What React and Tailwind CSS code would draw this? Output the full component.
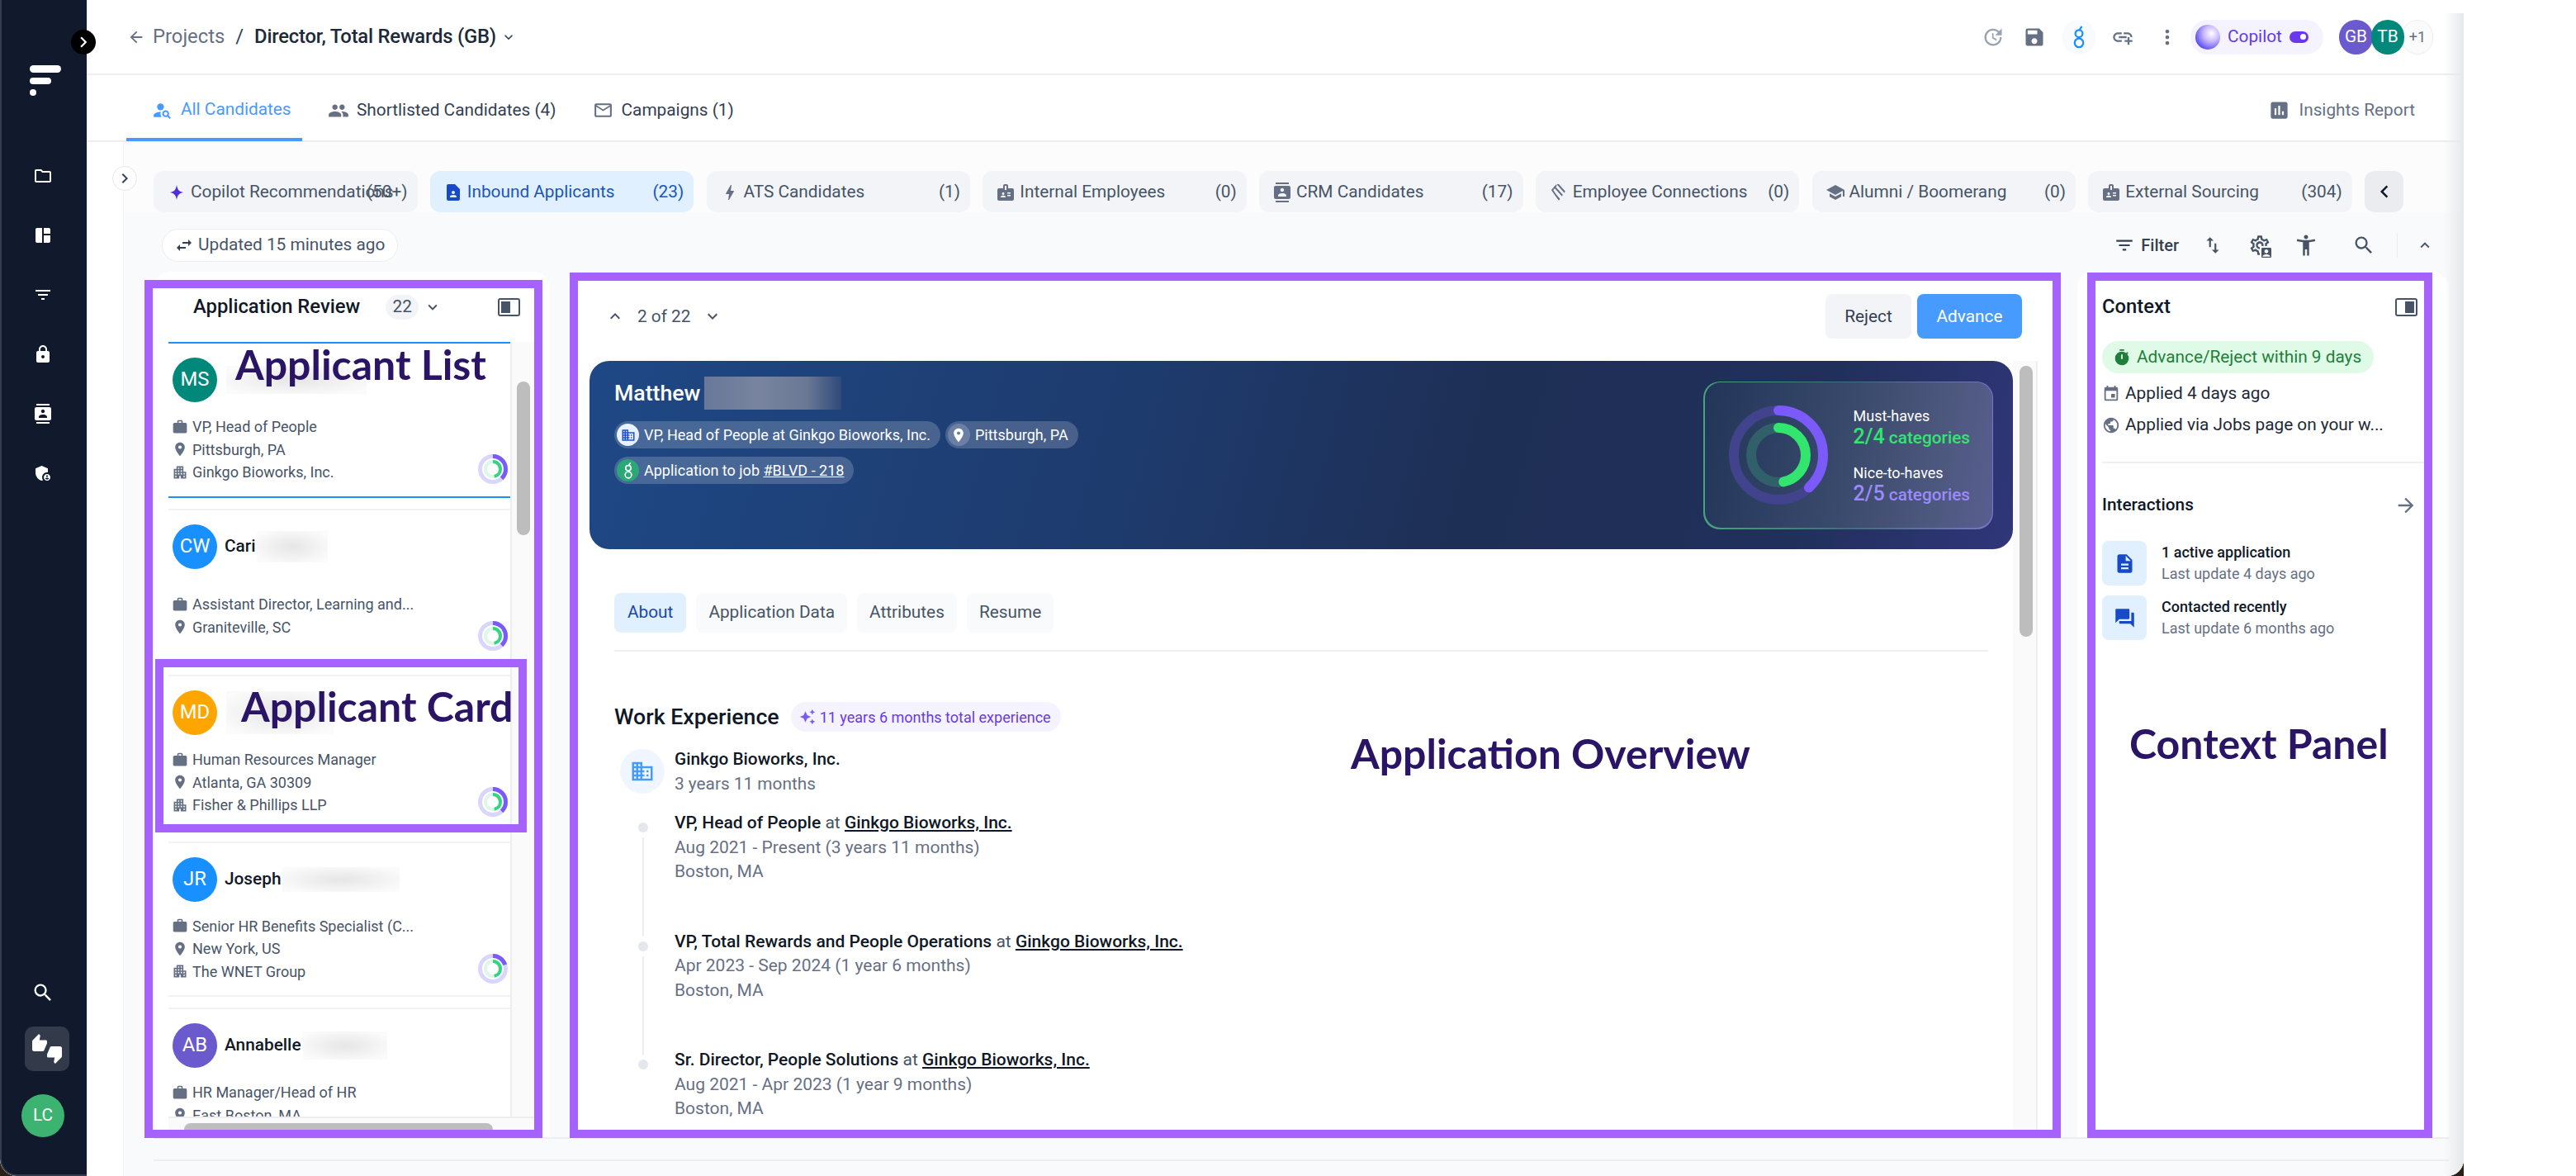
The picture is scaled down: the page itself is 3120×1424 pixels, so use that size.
import React from 'react';
import {
  MdArrowBack, MdExpandMore, MdExpandLess, MdUpdate, MdSave, MdAddLink, MdMoreVert, MdPersonSearch, MdPeople,
  MdMailOutline, MdAssessment, MdChevronRight, MdChevronLeft, MdAutoAwesome, MdContactPage, MdBolt, MdBadge,
  MdContacts, MdSchool, MdSwapHoriz, MdFilterList, MdSwapVert, MdOutlineSettings, MdAccountBox, MdAccessibilityNew,
  MdSearch, MdOutlineFolder, MdSpaceDashboard, MdLock, MdAdminPanelSettings, MdThumbsUpDown, MdWork, MdPlace,
  MdApartment, MdDomain, MdTimer, MdEvent, MdPublic, MdDescription, MdForum, MdArrowForward,
} from 'react-icons/md';

const chips = [
  { label: 'Copilot Recommendations', count: '(50+)', icon: <StarIcon /> },
  { label: 'Inbound Applicants', count: '(23)', icon: <MdContactPage size={24} />, active: true },
  { label: 'ATS Candidates', count: '(1)', icon: <MdBolt size={24} /> },
  { label: 'Internal Employees', count: '(0)', icon: <MdBadge size={24} /> },
  { label: 'CRM Candidates', count: '(17)', icon: <MdContacts size={24} /> },
  { label: 'Employee Connections', count: '(0)', icon: <ConnectionsIcon /> },
  { label: 'Alumni / Boomerang', count: '(0)', icon: <MdSchool size={24} /> },
  { label: 'External Sourcing', count: '(304)', icon: <MdBadge size={24} /> },
];

const applicants = [
  { initials: 'MS', color: 'bg-[#00897b]', name: '', title: 'VP, Head of People', place: 'Pittsburgh, PA', company: 'Ginkgo Bioworks, Inc.', selected: true, blur: 'w-[170px] h-[34px]' },
  { initials: 'CW', color: 'bg-[#1890ff]', name: 'Cari', title: 'Assistant Director, Learning and...', place: 'Graniteville, SC', blur: 'w-[86px] h-[38px]' },
  { initials: 'MD', color: 'bg-[#ffa500]', name: '', title: 'Human Resources Manager', place: 'Atlanta, GA 30309', company: 'Fisher & Phillips LLP', blur: 'w-[130px] h-[52px]' },
  { initials: 'JR', color: 'bg-[#1890ff]', name: 'Joseph', title: 'Senior HR Benefits Specialist (C...', place: 'New York, US', company: 'The WNET Group', blur: 'w-[142px] h-[30px]', arc: 20 },
  { initials: 'AB', color: 'bg-[#6a5acd]', name: 'Annabelle', title: 'HR Manager/Head of HR', place: 'East Boston, MA', blur: 'w-[102px] h-[34px]', alignTop: true },
];

const roles = [
  { title: 'VP, Head of People', dates: 'Aug 2021 - Present (3 years 11 months)', line: true },
  { title: 'VP, Total Rewards and People Operations', dates: 'Apr 2023 - Sep 2024 (1 year 6 months)', line: true },
  { title: 'Sr. Director, People Solutions', dates: 'Aug 2021 - Apr 2023 (1 year 9 months)' },
];

function StarIcon() {
  return (
    <svg width="18" height="20" viewBox="0 0 18 20" className="fill-[#4f2fd8]">
      <path d="M9 1C10 7 12 9 17 10 12 11 10 13 9 19 8 13 6 11 1 10 6 9 8 7 9 1Z" />
    </svg>
  );
}

function ConnectionsIcon() {
  return (
    <svg width="22" height="22" viewBox="0 0 22 22" fill="none" stroke="currentColor" strokeWidth="2">
      <clipPath id="diamond">
        <path d="M8 1h6l6 7-9 13L2 8z" />
      </clipPath>
      <g clipPath="url(#diamond)">
        <path d="M-2 4 14 22M2 0l18 20M7 -2l16 18M12 -3l12 13" />
        <path d="M8 2 3 8l8 12" />
      </g>
    </svg>
  );
}

function BumpIcon({ size = 24, className }) {
  return (
    <svg width={size} height={size} viewBox="0 0 24 24" fill="none" stroke="currentColor" strokeWidth="1.8" className={className}>
      <circle cx="12" cy="8.500" r="3.500" />
      <circle cx="12" cy="17.500" r="4.200" />
      <path d="M14.800 1.500 12.500 5" />
    </svg>
  );
}

function PanelIcon({ side }) {
  return (
    <div className="w-[27px] h-[22px] rounded-[3px] border-2 border-[#475467] flex p-[2px] justify-start">
      <div className={`w-[11px] h-full bg-[#475467] ${side === 'right' ? 'ml-auto' : ''}`} />
    </div>
  );
}

function ScoreRing({ outerArc = 38 }) {
  return (
    <svg width="36" height="36" viewBox="0 0 36 36" fill="none" className="-rotate-90">
      <circle cx="18" cy="18" r="15.500" stroke="#d9d6fe" strokeWidth="5" />
      <circle cx="18" cy="18" r="15.500" stroke="#7a5af8" strokeWidth="5" pathLength="100" strokeDasharray={`${outerArc} 100`} />
      <circle cx="18" cy="18" r="9" stroke="#dff7e8" strokeWidth="4" />
      <circle cx="18" cy="18" r="9" stroke="#32d583" strokeWidth="4" pathLength="100" strokeDasharray="47 100" />
    </svg>
  );
}

function DetailRow({ icon, children }) {
  return (
    <div className="flex items-center gap-[5px] h-[27.500px] pl-[4px] text-[18px] text-[#475467] whitespace-nowrap">
      <span className="text-[#667085] shrink-0">{icon}</span>
      <span>{children}</span>
    </div>
  );
}

function ApplicantCard({ person }) {
  const edge = person.selected ? 'border-[#1890ff]' : 'border-[#f2f2f2]';
  return (
    <div className={`relative h-[188.500px] mb-[13px] border-y-2 ${edge} shrink-0`}>
      <div className="flex items-center pl-[5px] pt-[17px]">
        <div className={`w-[54px] h-[54px] rounded-full ${person.color} text-white text-[23.800px] flex items-center justify-center shrink-0`}>{person.initials}</div>
        <span className="ml-[9px] text-[20.800px] font-medium text-[#101828]">{person.name}</span>
        <div className={`${person.blur} ml-[2px] bg-[radial-gradient(ellipse_at_50%_50%,#e6e6e6,#fbfbfb_85%)]`} />
      </div>
      <div className={`mt-[15px] h-[84px] flex flex-col ${person.alignTop ? 'pt-[1px]' : 'justify-center'}`}>
        <DetailRow icon={<MdWork size={20} />}>{person.title}</DetailRow>
        <DetailRow icon={<MdPlace size={20} />}>{person.place}</DetailRow>
        {person.company && <DetailRow icon={<MdApartment size={20} />}>{person.company}</DetailRow>}
      </div>
      <div className="absolute right-[3px] top-[134px]">
        <ScoreRing outerArc={person.arc || 38} />
      </div>
    </div>
  );
}

function Sidebar() {
  return (
    <aside className="w-[105px] shrink-0 bg-[#111a2c] border-l-2 border-b-2 border-[#363c4b] rounded-bl-[20px] flex flex-col items-center text-white pr-[3px]">
      <svg width="38" height="38" viewBox="0 0 38 38" className="mt-[78px] ml-[6px] fill-white">
        <rect x="0" y="1" width="38" height="9" rx="4.500" />
        <rect x="0" y="16" width="26" height="8" rx="4" />
        <rect x="0" y="30" width="8" height="8" rx="4" />
      </svg>
      <div className="mt-[85px] flex flex-col items-center gap-[48px]">
        <MdOutlineFolder size={24} />
        <MdSpaceDashboard size={24} />
        <MdFilterList size={24} />
        <MdLock size={24} />
        <MdContacts size={24} />
        <MdAdminPanelSettings size={24} />
      </div>
      <div className="mt-auto flex flex-col items-center pb-[45px]">
        <MdSearch size={28} />
        <div className="mt-[27px] ml-[10px] w-[54px] h-[54px] rounded-[10px] bg-[#333a4a] flex items-center justify-center">
          <MdThumbsUpDown size={36} />
        </div>
        <div className="mt-[28px] w-[52px] h-[52px] rounded-full bg-[#3cb371] text-[20.800px] flex items-center justify-center">LC</div>
      </div>
    </aside>
  );
}

function TopBar() {
  return (
    <header className="h-[91px] shrink-0 border-b-2 border-[#eeeeee] flex items-center pl-[49px] pr-[37px]">
      <MdArrowBack size={22} className="text-[#667085]" />
      <span className="ml-[9px] text-[23.800px] text-[#667085]">Projects</span>
      <span className="ml-[13px] text-[23.800px] text-[#344054]">/</span>
      <span className="ml-[13px] text-[23.800px] font-medium text-[#1d2939] tracking-[-0.200px]">Director, Total Rewards (GB)</span>
      <MdExpandMore size={20} className="ml-[5px] text-[#344054]" />
      <div className="ml-auto flex items-center">
        <MdUpdate size={28} className="text-[#98a2b3]" />
        <MdSave size={28} className="ml-[22px] text-[#667085]" />
        <div className="ml-[20px] w-[40px] h-[42px] rounded-full bg-[#f9fafb] flex items-center justify-center text-[#1890ff]">
          <BumpIcon size={30} />
        </div>
        <MdAddLink size={28} className="ml-[19px] text-[#667085]" />
        <MdMoreVert size={28} className="ml-[26px] text-[#667085]" />
        <div className="ml-[14px] w-[161px] h-[42px] rounded-full bg-[#f4f3ff] flex items-center pl-[6px]">
          <div className="w-[30px] h-[30px] rounded-full bg-[radial-gradient(circle_at_65%_35%,#ffffff,#c9b8ff_35%,#5b4df0_75%,#3a35d0)]" />
          <span className="ml-[9px] text-[20.800px] text-[#5f3ce8]">Copilot</span>
          <div className="ml-[9px] w-[23px] h-[14px] rounded-full bg-[#6938ef] flex items-center justify-end pr-[3px]">
            <div className="w-[7px] h-[7px] rounded-full bg-white" />
          </div>
        </div>
        <div className="ml-[19px] flex items-center">
          <div className="w-[41px] h-[42px] rounded-full bg-[#6a5acd] text-white text-[20.800px] flex items-center justify-center">GB</div>
          <div className="-ml-[2px] w-[40px] h-[42px] rounded-full bg-[#00897b] text-white text-[20.800px] flex items-center justify-center z-10">TB</div>
          <div className="-ml-[3px] w-[38px] h-[42px] rounded-full bg-[#fbfbfb] border border-[#eeeeee] text-[#667085] text-[18px] flex items-center justify-center">+1</div>
        </div>
      </div>
    </header>
  );
}

function TabBar() {
  return (
    <nav className="h-[81px] shrink-0 border-b-2 border-[#eeeeee] flex pl-[48px] pr-[59px] text-[20.800px]">
      <div className="w-[213px] h-[80px] border-b-[4px] border-[#479bff] flex items-center pl-[31px] pt-[8px] text-[#479bff] gap-[10px]">
        <MdPersonSearch size={25} />
        <span>All Candidates</span>
      </div>
      <div className="ml-[31px] flex items-center pt-[6px] gap-[9px] text-[#344054]">
        <MdPeople size={26} className="text-[#667085]" />
        <span>Shortlisted Candidates (4)</span>
      </div>
      <div className="ml-[44px] flex items-center pt-[6px] gap-[10px] text-[#344054]">
        <MdMailOutline size={25} className="text-[#667085]" />
        <span>Campaigns (1)</span>
      </div>
      <div className="ml-auto flex items-center pt-[6px] gap-[10px] text-[#667085]">
        <MdAssessment size={27} />
        <span>Insights Report</span>
      </div>
    </nav>
  );
}

function ListPanel() {
  return (
    <section className="w-[479px] shrink-0 h-[1048px] bg-white rounded-t-[20px] flex flex-col overflow-hidden">
      <div className="h-[85px] shrink-0 flex items-center pl-[47px] pr-[36px]">
        <h2 className="text-[23.800px] font-medium text-[#101828]">Application Review</h2>
        <span className="ml-[31px] w-[40px] h-[30px] rounded-full bg-[#f2f4f7] text-[#475467] text-[20.800px] flex items-center justify-center">22</span>
        <MdExpandMore size={22} className="ml-[6px] text-[#475467]" />
        <div className="ml-auto">
          <PanelIcon side="left" />
        </div>
      </div>
      <div className="flex-1 min-h-0 flex pl-[17px] pr-[19px]">
        <div className="w-[414px] overflow-hidden flex flex-col">
          {applicants.map((person) => (
            <ApplicantCard key={person.initials} person={person} />
          ))}
        </div>
        <div className="w-[29px] border-l-2 border-[#eeeeee] bg-[#fafafa] pl-[6px]">
          <div className="mt-[48px] w-[16px] h-[186px] rounded-full bg-[#bdbdbd]" />
        </div>
      </div>
      <div className="h-[25px] shrink-0 ml-[17px] mr-[17px] border-t-2 border-[#eeeeee] bg-[#fafafa] pt-[6px] pl-[19px]">
        <div className="w-[374px] h-[16px] rounded-full bg-[#bdbdbd]" />
      </div>
    </section>
  );
}

function Role({ role }) {
  return (
    <div className="h-[143.500px] flex shrink-0">
      <div className="w-[73px] pr-[3px] flex flex-col items-center pt-[14px] shrink-0">
        <div className="w-[12px] h-[12px] rounded-full bg-[#e4e7ec] shrink-0" />
        {role.line && <div className="mt-[6px] w-[2px] h-[119px] bg-[#eaecf0] shrink-0" />}
      </div>
      <div className="text-[21px] leading-[29.500px]">
        <div className="font-medium text-[#101828]">
          {role.title} <span className="font-normal text-[#475467]">at</span> <span className="underline">Ginkgo Bioworks, Inc.</span>
        </div>
        <div className="text-[#667085]">{role.dates}</div>
        <div className="text-[#667085]">Boston, MA</div>
      </div>
    </div>
  );
}

function HeroPill({ icon, iconBg, children }) {
  return (
    <div className="h-[33px] rounded-full bg-[#ffffff30] flex items-center pl-[3px] pr-[12px] text-[18px] text-white">
      <span className={`w-[27px] h-[27px] rounded-full ${iconBg} flex items-center justify-center shrink-0`}>{icon}</span>
      <span className="ml-[6px] whitespace-nowrap">{children}</span>
    </div>
  );
}

function ScoreCard() {
  return (
    <div className="w-[351px] h-[179px] rounded-[20px] p-[1.500px] bg-[linear-gradient(90deg,#46a57d,#3e7078_50%,#7b73c9)]">
      <div className="w-full h-full rounded-[19px] flex items-center pl-[29px] bg-[linear-gradient(100deg,#223659,#3a4a6c_50%,#4d587e_80%,#585e8f)]">
        <svg width="120" height="120" viewBox="0 0 120 120" fill="none" className="-rotate-90 shrink-0">
          <circle cx="60" cy="60" r="54" stroke="#41438c" strokeWidth="12" />
          <circle cx="60" cy="60" r="54" stroke="#7a5af8" strokeWidth="12" strokeLinecap="round" pathLength="100" strokeDasharray="38 100" />
          <circle cx="60" cy="60" r="33" stroke="#31606a" strokeWidth="12" />
          <circle cx="60" cy="60" r="33" stroke="#32e56f" strokeWidth="12" strokeLinecap="round" pathLength="100" strokeDasharray="47 100" />
        </svg>
        <div className="ml-[31px] text-white">
          <div className="text-[18px] leading-[25px]">Must-haves</div>
          <div className="text-[#32e56f] font-medium text-[20.800px] leading-[26px]"><span className="text-[25px]">2/4</span> categories</div>
          <div className="mt-[17px] text-[18px] leading-[25px]">Nice-to-haves</div>
          <div className="text-[#9b8afb] font-medium text-[20.800px] leading-[26px]"><span className="text-[25px]">2/5</span> categories</div>
        </div>
      </div>
    </div>
  );
}

function OverviewPanel() {
  return (
    <section className="w-[1806px] shrink-0 h-[1048px] bg-white flex flex-col overflow-hidden">
      <div className="h-[108px] shrink-0 flex items-center pl-[43px] pr-[47px]">
        <MdExpandLess size={24} className="text-[#475467]" />
        <span className="ml-[15px] pt-[2px] text-[20.800px] text-[#475467]">2 of 22</span>
        <MdExpandMore size={24} className="ml-[15px] text-[#475467]" />
        <button className="ml-auto w-[104px] h-[54px] pt-[2px] rounded-[8px] bg-[#f2f4f7] text-[20.800px] text-[#344054]">Reject</button>
        <button className="ml-[7px] w-[127px] h-[54px] pt-[2px] rounded-[8px] bg-[#479bff] text-[20.800px] text-white">Advance</button>
      </div>
      <div className="flex-1 min-h-0 flex pl-[24px]">
        <div className="w-[1724px] shrink-0 overflow-hidden">
          <div className="h-[228px] rounded-[24px] flex items-center justify-between pl-[30px] pr-[24px] bg-[linear-gradient(105deg,#1e4885,#1e3a6c_40%,#1e2f55_62%,#21305b_85%,#30367a)]">
            <div className="self-start pt-[19px]">
              <div className="flex items-center h-[40px]">
                <span className="text-[26.700px] font-medium text-white">Matthew</span>
                <div className="ml-[5px] w-[166px] h-[40px] bg-[linear-gradient(90deg,#69789a,#78849f_40%,#6a7895_75%,#2f4a7a)]" />
              </div>
              <div className="mt-[14px] flex gap-[6px]">
                <HeroPill iconBg="bg-[#e8f1ff]" icon={<MdDomain size={18} className="text-[#1d4ed8]" />}>VP, Head of People at Ginkgo Bioworks, Inc.</HeroPill>
                <HeroPill iconBg="bg-[#ffffff30]" icon={<MdPlace size={20} className="text-white" />}>Pittsburgh, PA</HeroPill>
              </div>
              <div className="mt-[10px] flex">
                <HeroPill iconBg="bg-[#2aa876]" icon={<BumpIcon size={22} className="text-white" />}>
                  Application to job <span className="underline">#BLVD - 218</span>
                </HeroPill>
              </div>
            </div>
            <ScoreCard />
          </div>
          <div className="mt-[53px] mx-[30px] pb-[21px] border-b-2 border-[#f0f0f0] flex gap-[12px] text-[20.800px] text-[#475467]">
            <div className="h-[48px] px-[16px] rounded-[8px] bg-[#e0f0ff] text-[#1849a9] flex items-center">About</div>
            <div className="h-[48px] px-[15px] rounded-[8px] bg-[#f9fafb] flex items-center">Application Data</div>
            <div className="h-[48px] px-[15px] rounded-[8px] bg-[#f9fafb] flex items-center">Attributes</div>
            <div className="h-[48px] px-[15px] rounded-[8px] bg-[#f9fafb] flex items-center">Resume</div>
          </div>
          <div className="mt-[61px] ml-[30px] flex items-center h-[36px]">
            <h3 className="text-[26.700px] font-medium text-[#101828]">Work Experience</h3>
            <div className="ml-[14px] h-[36px] rounded-full bg-[#f4f3ff] flex items-center pl-[10px] pr-[12px] text-[18px] text-[#6938ef] gap-[5px]">
              <MdAutoAwesome size={20} className="text-[#7a5af8]" />
              <span>11 years 6 months total experience</span>
            </div>
          </div>
          <div className="mt-[21px] ml-[37px] flex h-[75px]">
            <div className="w-[54px] h-[54px] rounded-full bg-[#eff6ff] flex items-center justify-center text-[#479bff] shrink-0">
              <MdDomain size={30} />
            </div>
            <div className="ml-[12px] -mt-[3px] text-[20.800px] leading-[30px]">
              <div className="font-medium text-[#101828]">Ginkgo Bioworks, Inc.</div>
              <div className="text-[#667085]">3 years 11 months</div>
            </div>
          </div>
          <div className="ml-[30px]">
            {roles.map((role) => (
              <Role key={role.title} role={role} />
            ))}
          </div>
        </div>
        <div className="w-[30px] shrink-0 bg-[#fafafa] border-r-2 border-[#eeeeee] pl-[8px] pt-[6px]">
          <div className="w-[16px] h-[328px] rounded-full bg-[#bdbdbd]" />
        </div>
      </div>
    </section>
  );
}

function ContextRow({ icon, title, sub }) {
  return (
    <div className="flex items-center">
      <div className="w-[54px] h-[54px] rounded-[8px] bg-[#e0f0ff] text-[#1849c9] flex items-center justify-center shrink-0">{icon}</div>
      <div className="ml-[18px]">
        <div className="text-[18px] font-medium leading-[26px] text-[#101828]">{title}</div>
        <div className="text-[18px] leading-[26px] text-[#667085]">{sub}</div>
      </div>
    </div>
  );
}

function ContextPanel() {
  return (
    <section className="w-[450px] shrink-0 h-[1048px] bg-white rounded-t-[20px] pl-[30px] pr-[38px] flex flex-col">
      <div className="h-[84px] pt-[2px] shrink-0 flex items-center justify-between">
        <h2 className="text-[23.800px] font-medium text-[#101828]">Context</h2>
        <PanelIcon side="right" />
      </div>
      <div className="w-[329px] h-[39px] rounded-full bg-[#dffbe8] flex items-center pl-[13px] gap-[7px] text-[20.800px] text-[#1f7f3a]">
        <MdTimer size={22} />
        <span>Advance/Reject within 9 days</span>
      </div>
      <div className="mt-[6px] h-[38px] flex items-center gap-[6px] text-[20.800px] text-[#1d2939]">
        <MdEvent size={22} className="text-[#667085]" />
        <span>Applied 4 days ago</span>
      </div>
      <div className="h-[38px] flex items-center gap-[6px] text-[20.800px] text-[#1d2939] whitespace-nowrap">
        <MdPublic size={22} className="text-[#667085]" />
        <span>Applied via Jobs page on your w...</span>
      </div>
      <div className="mt-[25px] border-t-2 border-[#f0f0f0] -mr-[18px]" />
      <div className="mt-[33px] flex items-center justify-between h-[36px]">
        <h3 className="text-[20.800px] font-medium text-[#101828]">Interactions</h3>
        <MdArrowForward size={28} className="text-[#667085]" />
      </div>
      <div className="mt-[25px] flex flex-col gap-[12px]">
        <ContextRow icon={<MdDescription size={27} />} title="1 active application" sub="Last update 4 days ago" />
        <ContextRow icon={<MdForum size={27} />} title="Contacted recently" sub="Last update 6 months ago" />
      </div>
    </section>
  );
}

function Workspace() {
  return (
    <div className="flex-1 min-h-0 flex">
      <div className="w-[44px] shrink-0 bg-white" />
      <div className="relative flex-1 min-w-0 bg-[#f9fafb] border-l border-[#f2f4f7] flex flex-col">
        <div className="absolute left-[-14px] top-[29px] w-[30px] h-[30px] rounded-full bg-white border border-[#e4e7ec] flex items-center justify-center text-[#344054]">
          <MdChevronRight size={24} />
        </div>
        <div className="h-[85px] shrink-0 bg-[#fcfcfc] flex items-end pl-[36px] gap-[15.250px]">
          {chips.map((chip) => (
            <div
              key={chip.label}
              className={`relative w-[319.500px] h-[50px] rounded-[12px] flex items-center pl-[16px] pt-[1px] text-[20.800px] whitespace-nowrap shrink-0 ${chip.active ? 'bg-[#e0f0ff] text-[#1d55b8]' : 'bg-[#f2f4f7] text-[#475467]'}`}
            >
              <span className={`w-[24px] flex justify-center shrink-0 ${chip.active ? 'text-[#1849c9]' : 'text-[#667085]'}`}>{chip.icon}</span>
              <span className="ml-[5px]">{chip.label}</span>
              <span className="absolute right-[12px]">{chip.count}</span>
            </div>
          ))}
          <div className="w-[47px] h-[50px] rounded-[12px] bg-[#eaecf0] flex items-center justify-center text-[#101828] shrink-0">
            <MdChevronLeft size={30} />
          </div>
        </div>
        <div className="h-[72px] shrink-0 flex items-center pt-[8px] pl-[46px] pr-[36px]">
          <div className="w-[286px] h-[40px] rounded-full bg-white border border-[#eeeeee] flex items-center pl-[14px] gap-[5px] text-[20.800px] text-[#475467]">
            <MdSwapHoriz size={24} className="text-[#344054]" />
            <span>Updated 15 minutes ago</span>
          </div>
          <div className="ml-auto flex items-center text-[#475467]">
            <MdFilterList size={26} className="text-[#344054]" />
            <span className="ml-[7px] text-[20px] font-medium text-[#344054]">Filter</span>
            <MdSwapVert size={26} className="ml-[28px]" />
            <div className="relative ml-[30px] w-[28px] h-[28px]">
              <MdOutlineSettings size={28} />
              <MdAccountBox size={16} className="absolute -right-[2px] -bottom-[3px] bg-[#f9fafb]" />
            </div>
            <MdAccessibilityNew size={30} className="ml-[27px]" />
            <MdSearch size={28} className="ml-[41px]" />
            <div className="ml-[26px] w-px h-[30px] bg-[#eaecf0]" />
            <MdExpandLess size={22} className="ml-[22px]" />
          </div>
        </div>
        <div className="flex pl-[37px] h-[1048px]">
          <ListPanel />
          <div className="w-[24px] shrink-0" />
          <OverviewPanel />
          <div className="w-[20px] shrink-0" />
          <ContextPanel />
        </div>
        <div className="h-[27px] shrink-0 ml-[36px] mr-[18px] border-t-2 border-[#eeeeee]" />
        <div className="ml-[36px] mr-[18px] border-t-2 border-[#eeeeee]" />
      </div>
    </div>
  );
}

const frames = [
  { id: 'list', box: 'left-[175px] top-[339px] w-[482px] h-[1039px]' },
  { id: 'card', box: 'left-[188px] top-[798px] w-[450px] h-[210px]' },
  { id: 'overview', box: 'left-[690px] top-[330px] w-[1806px] h-[1048px]' },
  { id: 'context', box: 'left-[2528px] top-[330px] w-[418px] h-[1048px]' },
];

const labels = [
  { text: 'Applicant List', box: 'left-[285px] top-[411px]' },
  { text: 'Applicant Card', box: 'left-[292px] top-[825px]' },
  { text: 'Application Overview', box: 'left-[1636px] top-[882px]' },
  { text: 'Context Panel', box: 'left-[2579px] top-[870px]' },
];

export default function App() {
  return (
    <div className="relative w-[3120px] h-[1424px] bg-white overflow-hidden font-['Roboto',sans-serif]">
      <div className="w-[2984px] h-full bg-[#2a2016]">
        <div className="w-full h-full flex bg-white rounded-b-[20px] overflow-hidden">
          <Sidebar />
          <main className="flex-1 min-w-0 flex flex-col">
            <TopBar />
            <TabBar />
            <Workspace />
          </main>
        </div>
      </div>
      <div className="absolute left-[2960px] top-[16px] bottom-0 w-[24px] rounded-br-[20px] bg-gradient-to-r from-transparent to-[#e6e8ea]" />
      <div className="absolute left-[86px] top-[36px] w-[30px] h-[30px] rounded-full bg-black text-white flex items-center justify-center">
        <MdChevronRight size={26} />
      </div>
      {frames.map((frame) => (
        <div key={frame.id} className={`absolute border-[10px] border-[#a562ff] ${frame.box}`} />
      ))}
      {labels.map((label) => (
        <div key={label.text} className={`absolute text-[50px] leading-[60px] font-bold text-[#2a1465] whitespace-nowrap font-['Lato',sans-serif] ${label.box}`}>
          {label.text}
        </div>
      ))}
    </div>
  );
}
